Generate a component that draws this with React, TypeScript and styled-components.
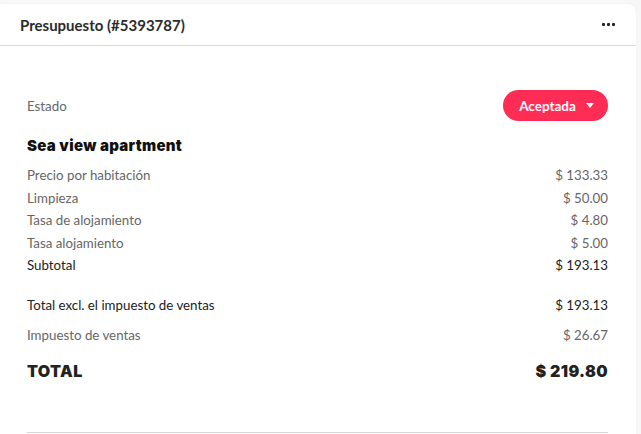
import React from "react";
import styled, { createGlobalStyle } from "styled-components";

const Global = createGlobalStyle`
  html, body { margin: 0; padding: 0; background: #f7f7f7; }
  body { font-family: Lato, "Open Sans", sans-serif; -webkit-font-smoothing: antialiased; }
`;

const Card = styled.div`
  margin-top: 4px;
  width: 636px;
  height: 440px;
  background: #fff;
  border-radius: 0 8px 0 0;
  box-shadow: 0 0 2px rgba(0, 0, 0, 0.06);
  display: flex;
  flex-direction: column;
`;

const Header = styled.div`
  height: 42px;
  box-sizing: border-box;
  display: flex;
  align-items: center;
  justify-content: space-between;
  padding: 0 20px;
  border-bottom: 1px solid #dcdcdc;
`;

const Title = styled.h2`
  margin: 0;
  font-size: 15px;
  font-weight: 700;
  color: #2b2b2b;
`;

const Dots = styled.div`
  display: flex;
  gap: 2px;
  padding-right: 1px;
  span { width: 3px; height: 3px; background: #222; border-radius: 1px; }
`;

const Body = styled.div`
  padding: 44px 28px 0 27px;
  display: flex;
  flex-direction: column;
`;

const StatusRow = styled.div`
  display: flex;
  align-items: center;
  justify-content: space-between;
  height: 31px;
`;

const Label = styled.span<{ $tone?: "muted" | "dark" }>`
  font-size: 13.3px;
  color: ${(p) => (p.$tone === "dark" ? "#222" : "#666")};
`;

const Pill = styled.button`
  height: 31px;
  width: 105px;
  border: none;
  border-radius: 16px;
  background: #ff2d55;
  color: #fff;
  font-family: Lato, sans-serif;
  font-size: 13.5px;
  font-weight: 700;
  display: flex;
  align-items: center;
  justify-content: center;
  gap: 10px;
  padding: 0 0 0 2px;
  svg { display: block; }
`;

const Heading = styled.h3`
  margin: 15px 0 9px;
  font-family: Inter, sans-serif;
  font-weight: 900;
  font-size: 15px;
  color: #111;
  letter-spacing: 0.3px;
`;

const Row = styled.div<{ $h?: number }>`
  display: flex;
  justify-content: space-between;
  align-items: center;
  height: ${(p) => p.$h ?? 22.5}px;
`;

const Spacer = styled.div<{ $h: number }>`
  height: ${(p) => p.$h}px;
`;

const Big = styled.span`
  font-family: Inter, sans-serif;
  font-weight: 900;
  font-size: 16px;
  letter-spacing: 0.4px;
  color: #222;
`;

const Divider = styled.hr`
  margin: 0;
  border: none;
  border-top: 1px solid #d6d6d6;
`;

const items: [string, string, "muted" | "dark"][] = [
  ["Precio por habitación", "$ 133.33", "muted"],
  ["Limpieza", "$ 50.00", "muted"],
  ["Tasa de alojamiento", "$ 4.80", "muted"],
  ["Tasa alojamiento", "$ 5.00", "muted"],
  ["Subtotal", "$ 193.13", "dark"],
];

export default function App() {
  return (
    <>
      <Global />
      <Card>
        <Header>
          <Title>Presupuesto (#5393787)</Title>
          <Dots><span /><span /><span /></Dots>
        </Header>
        <Body>
          <StatusRow>
            <Label>Estado</Label>
            <Pill>
              Aceptada
              <svg width="8" height="5" viewBox="0 0 8 5"><path d="M0 0h8L4 5z" fill="#fff" /></svg>
            </Pill>
          </StatusRow>
          <Heading>Sea view apartment</Heading>
          {items.map(([l, v, t]) => (
            <Row key={l}>
              <Label $tone={t}>{l}</Label>
              <Label $tone={t}>{v}</Label>
            </Row>
          ))}
          <Spacer $h={17} />
          <Row>
            <Label $tone="dark">Total excl. el impuesto de ventas</Label>
            <Label $tone="dark">$ 193.13</Label>
          </Row>
          <Spacer $h={8} />
          <Row>
            <Label>Impuesto de ventas</Label>
            <Label>$ 26.67</Label>
          </Row>
          <Spacer $h={13} />
          <Row $h={22}>
            <Big>TOTAL</Big>
            <Big>$ 219.80</Big>
          </Row>
          <Spacer $h={50} />
          <Divider />
        </Body>
      </Card>
    </>
  );
}
